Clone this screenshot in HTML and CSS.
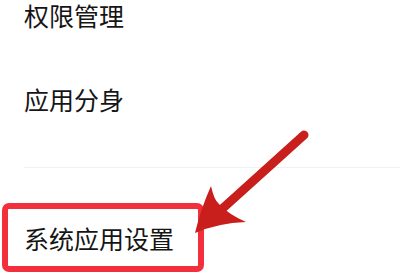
FILE: index.html
```html
<!DOCTYPE html>
<html lang="zh-CN">
<head>
<meta charset="utf-8">
<link rel="stylesheet" href="styles.css">
</head>
<body>
<div class="list">
  <div class="item item-first">权限管理</div>
  <div class="item item-second">应用分身</div>
  <div class="divider"></div>
  <div class="highlight">
    <div class="item">系统应用设置</div>
  </div>
</div>
<svg class="arrow" width="400" height="273" viewBox="0 0 400 273">
  <line x1="304" y1="135" x2="222" y2="209" stroke="#c81e1c" stroke-width="9" stroke-linecap="round"/>
  <path d="M195 233 Q201 208 211 186 Q214 200 219 204 Q228 214 246 222 Q218 223 195 233 Z" fill="#c81e1c"/>
</svg>
</body>
</html>
```
FILE: styles.css
```css
html, body {
  margin: 0;
  padding: 0;
  background: #ffffff;
}
body {
  width: 400px;
  height: 273px;
  overflow: hidden;
  position: relative;
  font-family: "Noto Sans CJK SC", "Noto Sans", sans-serif;
  color: #151515;
}
.list {
  display: flex;
  flex-direction: column;
  align-items: flex-start;
}
.item {
  font-size: 25px;
  line-height: 30px;
  height: 30px;
  white-space: nowrap;
}
.item-first {
  padding-left: 24px;
}
.item-second {
  margin-top: 54px;
  padding-left: 24px;
}
.divider {
  margin-top: 53px;
  margin-left: 24px;
  align-self: stretch;
  height: 1px;
  background: #f1f1f1;
}
.highlight {
  margin-top: 35px;
  margin-left: 2px;
  width: 174px;
  padding: 14px 0 13px 16px;
  border: 6px solid #f2303d;
  border-radius: 7px;
}
.arrow {
  position: absolute;
  left: 0;
  top: 0;
}
```
